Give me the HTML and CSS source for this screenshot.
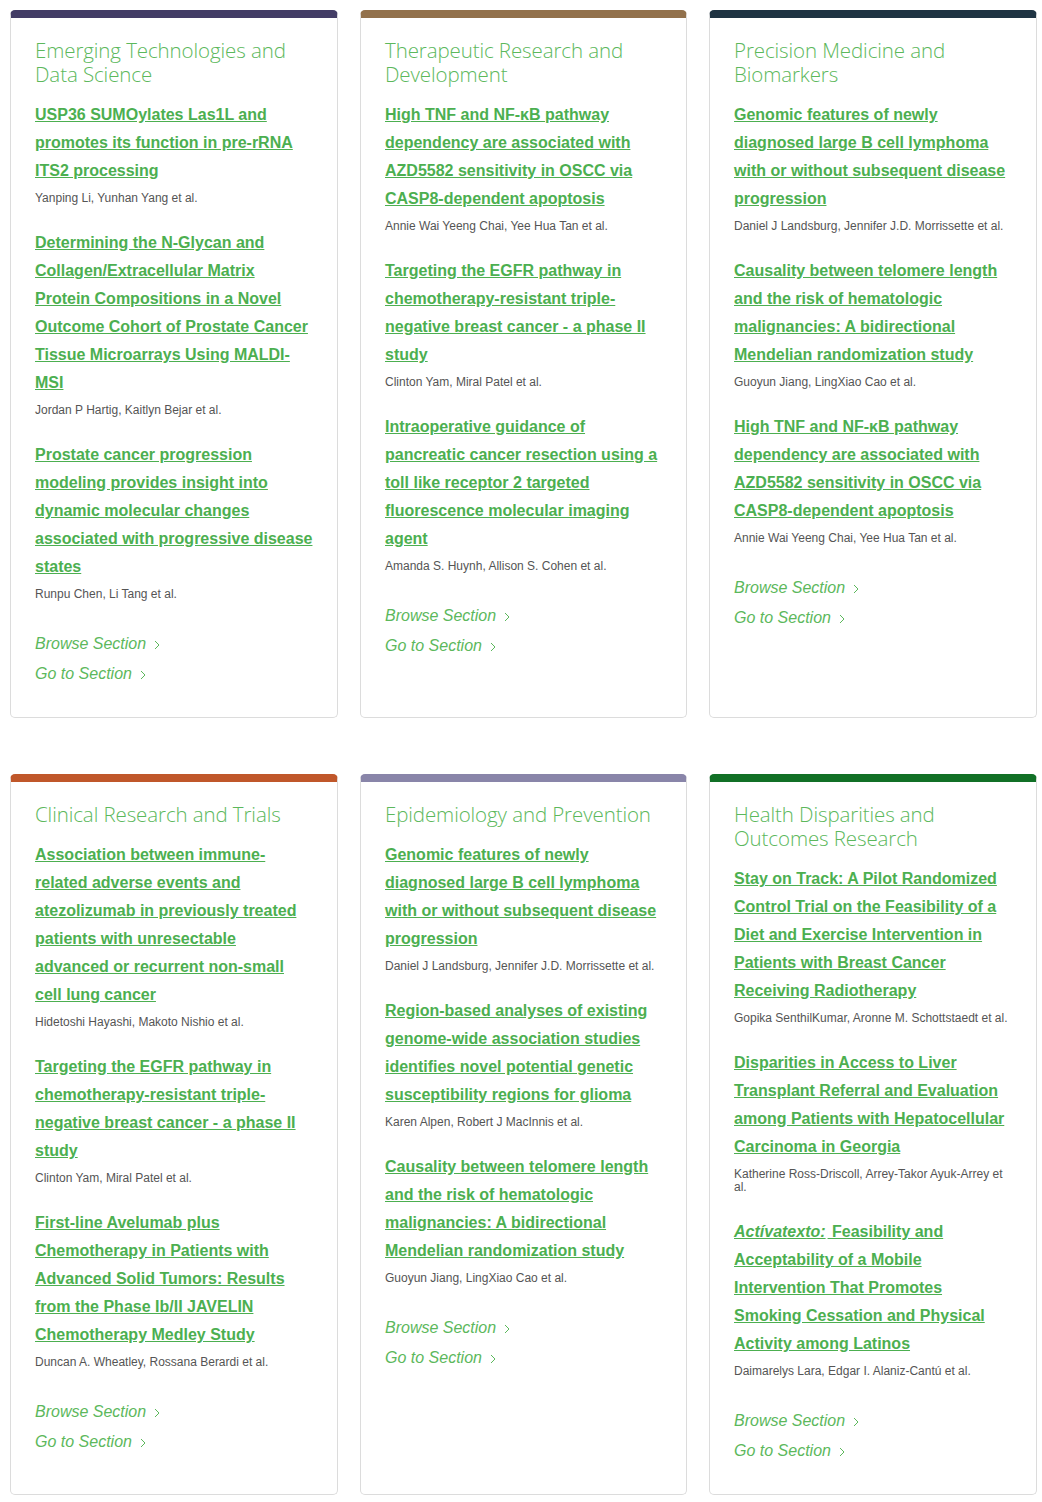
FILE: index.html
```html
<!DOCTYPE html>
<html>
<head>
<meta charset="utf-8">
<link rel="stylesheet" href="styles.css">
</head>
<body>
<div class="grid">

  <section class="card bar-purple">
    <h2 class="card-title">Emerging Technologies and Data Science</h2>
    <div class="article">
      <a class="art-link" href="#">USP36 SUMOylates Las1L and promotes its function in pre-rRNA ITS2 processing</a>
      <p class="authors">Yanping Li, Yunhan Yang et al.</p>
    </div>
    <div class="article">
      <a class="art-link" href="#">Determining the N-Glycan and Collagen/Extracellular Matrix Protein Compositions in a Novel Outcome Cohort of Prostate Cancer Tissue Microarrays Using MALDI-MSI</a>
      <p class="authors">Jordan P Hartig, Kaitlyn Bejar et al.</p>
    </div>
    <div class="article">
      <a class="art-link" href="#">Prostate cancer progression modeling provides insight into dynamic molecular changes associated with progressive disease states</a>
      <p class="authors">Runpu Chen, Li Tang et al.</p>
    </div>
    <div class="actions">
      <a class="action" href="#">Browse Section <svg class="chev" viewBox="0 0 6 10" width="6" height="10"><path d="M1 1 L5 5 L1 9" fill="none" stroke="currentColor" stroke-width="1"/></svg></a>
      <a class="action" href="#">Go to Section <svg class="chev" viewBox="0 0 6 10" width="6" height="10"><path d="M1 1 L5 5 L1 9" fill="none" stroke="currentColor" stroke-width="1"/></svg></a>
    </div>
  </section>

  <section class="card bar-brown">
    <h2 class="card-title">Therapeutic Research and Development</h2>
    <div class="article">
      <a class="art-link" href="#">High TNF and NF-κB pathway dependency are associated with AZD5582 sensitivity in OSCC via CASP8-dependent apoptosis</a>
      <p class="authors">Annie Wai Yeeng Chai, Yee Hua Tan et al.</p>
    </div>
    <div class="article">
      <a class="art-link" href="#">Targeting the EGFR pathway in chemotherapy-resistant triple-negative breast cancer - a phase II study</a>
      <p class="authors">Clinton Yam, Miral Patel et al.</p>
    </div>
    <div class="article">
      <a class="art-link" href="#">Intraoperative guidance of pancreatic cancer resection using a toll like receptor 2 targeted fluorescence molecular imaging agent</a>
      <p class="authors">Amanda S. Huynh, Allison S. Cohen et al.</p>
    </div>
    <div class="actions">
      <a class="action" href="#">Browse Section <svg class="chev" viewBox="0 0 6 10" width="6" height="10"><path d="M1 1 L5 5 L1 9" fill="none" stroke="currentColor" stroke-width="1"/></svg></a>
      <a class="action" href="#">Go to Section <svg class="chev" viewBox="0 0 6 10" width="6" height="10"><path d="M1 1 L5 5 L1 9" fill="none" stroke="currentColor" stroke-width="1"/></svg></a>
    </div>
  </section>

  <section class="card bar-navy">
    <h2 class="card-title">Precision Medicine and Biomarkers</h2>
    <div class="article">
      <a class="art-link" href="#">Genomic features of newly diagnosed large B cell lymphoma with or without subsequent disease progression</a>
      <p class="authors">Daniel J Landsburg, Jennifer J.D. Morrissette et al.</p>
    </div>
    <div class="article">
      <a class="art-link" href="#">Causality between telomere length and the risk of hematologic malignancies: A bidirectional Mendelian randomization study</a>
      <p class="authors">Guoyun Jiang, LingXiao Cao et al.</p>
    </div>
    <div class="article">
      <a class="art-link" href="#">High TNF and NF-κB pathway dependency are associated with AZD5582 sensitivity in OSCC via CASP8-dependent apoptosis</a>
      <p class="authors">Annie Wai Yeeng Chai, Yee Hua Tan et al.</p>
    </div>
    <div class="actions">
      <a class="action" href="#">Browse Section <svg class="chev" viewBox="0 0 6 10" width="6" height="10"><path d="M1 1 L5 5 L1 9" fill="none" stroke="currentColor" stroke-width="1"/></svg></a>
      <a class="action" href="#">Go to Section <svg class="chev" viewBox="0 0 6 10" width="6" height="10"><path d="M1 1 L5 5 L1 9" fill="none" stroke="currentColor" stroke-width="1"/></svg></a>
    </div>
  </section>

  <section class="card bar-orange">
    <h2 class="card-title">Clinical Research and Trials</h2>
    <div class="article">
      <a class="art-link" href="#">Association between immune-related adverse events and atezolizumab in previously treated patients with unresectable advanced or recurrent non-small cell lung cancer</a>
      <p class="authors">Hidetoshi Hayashi, Makoto Nishio et al.</p>
    </div>
    <div class="article">
      <a class="art-link" href="#">Targeting the EGFR pathway in chemotherapy-resistant triple-negative breast cancer - a phase II study</a>
      <p class="authors">Clinton Yam, Miral Patel et al.</p>
    </div>
    <div class="article">
      <a class="art-link" href="#">First-line Avelumab plus Chemotherapy in Patients with Advanced Solid Tumors: Results from the Phase Ib/II JAVELIN Chemotherapy Medley Study</a>
      <p class="authors">Duncan A. Wheatley, Rossana Berardi et al.</p>
    </div>
    <div class="actions">
      <a class="action" href="#">Browse Section <svg class="chev" viewBox="0 0 6 10" width="6" height="10"><path d="M1 1 L5 5 L1 9" fill="none" stroke="currentColor" stroke-width="1"/></svg></a>
      <a class="action" href="#">Go to Section <svg class="chev" viewBox="0 0 6 10" width="6" height="10"><path d="M1 1 L5 5 L1 9" fill="none" stroke="currentColor" stroke-width="1"/></svg></a>
    </div>
  </section>

  <section class="card bar-lavender">
    <h2 class="card-title">Epidemiology and Prevention</h2>
    <div class="article">
      <a class="art-link" href="#">Genomic features of newly diagnosed large B cell lymphoma with or without subsequent disease progression</a>
      <p class="authors">Daniel J Landsburg, Jennifer J.D. Morrissette et al.</p>
    </div>
    <div class="article">
      <a class="art-link" href="#">Region-based analyses of existing genome-wide association studies identifies novel potential genetic susceptibility regions for glioma</a>
      <p class="authors">Karen Alpen, Robert J MacInnis et al.</p>
    </div>
    <div class="article">
      <a class="art-link" href="#">Causality between telomere length and the risk of hematologic malignancies: A bidirectional Mendelian randomization study</a>
      <p class="authors">Guoyun Jiang, LingXiao Cao et al.</p>
    </div>
    <div class="actions">
      <a class="action" href="#">Browse Section <svg class="chev" viewBox="0 0 6 10" width="6" height="10"><path d="M1 1 L5 5 L1 9" fill="none" stroke="currentColor" stroke-width="1"/></svg></a>
      <a class="action" href="#">Go to Section <svg class="chev" viewBox="0 0 6 10" width="6" height="10"><path d="M1 1 L5 5 L1 9" fill="none" stroke="currentColor" stroke-width="1"/></svg></a>
    </div>
  </section>

  <section class="card bar-green">
    <h2 class="card-title">Health Disparities and Outcomes Research</h2>
    <div class="article">
      <a class="art-link" href="#">Stay on Track: A Pilot Randomized Control Trial on the Feasibility of a Diet and Exercise Intervention in Patients with Breast Cancer Receiving Radiotherapy</a>
      <p class="authors">Gopika SenthilKumar, Aronne M. Schottstaedt et al.</p>
    </div>
    <div class="article">
      <a class="art-link" href="#">Disparities in Access to Liver Transplant Referral and Evaluation among Patients with Hepatocellular Carcinoma in Georgia</a>
      <p class="authors">Katherine Ross-Driscoll, Arrey-Takor Ayuk-Arrey et al.</p>
    </div>
    <div class="article">
      <a class="art-link" href="#"><em>Actívatexto:</em> Feasibility and Acceptability of a Mobile Intervention That Promotes Smoking Cessation and Physical Activity among Latinos</a>
      <p class="authors">Daimarelys Lara, Edgar I. Alaniz-Cantú et al.</p>
    </div>
    <div class="actions">
      <a class="action" href="#">Browse Section <svg class="chev" viewBox="0 0 6 10" width="6" height="10"><path d="M1 1 L5 5 L1 9" fill="none" stroke="currentColor" stroke-width="1"/></svg></a>
      <a class="action" href="#">Go to Section <svg class="chev" viewBox="0 0 6 10" width="6" height="10"><path d="M1 1 L5 5 L1 9" fill="none" stroke="currentColor" stroke-width="1"/></svg></a>
    </div>
  </section>

</div>
</body>
</html>
```

FILE: styles.css
```css
html, body {
  margin: 0;
  padding: 0;
  background: #ffffff;
}

body {
  padding: 10px 5px 8px 10px;
  font-family: "Liberation Sans", Arial, sans-serif;
}

.grid {
  display: grid;
  grid-template-columns: 328px 327px 328px;
  column-gap: 22px;
  row-gap: 56px;
}

.card {
  border: 1px solid #dcdcdc;
  border-top: 8px solid #433d66;
  border-radius: 5px;
  padding: 20px 24px 28px 24px;
  background: #fff;
}

.bar-purple { border-top-color: #433d66; }
.bar-brown { border-top-color: #92714c; }
.bar-navy { border-top-color: #1f3443; }
.bar-orange { border-top-color: #c0572a; }
.bar-lavender { border-top-color: #8985a9; }
.bar-green { border-top-color: #117026; }

.card-title {
  margin: 0 0 15px 0;
  font-family: "Open Sans", sans-serif;
  font-weight: 300;
  font-size: 20.5px;
  line-height: 24px;
  color: #5cb85c;
  letter-spacing: -0.1px;
}

.article {
  margin-bottom: 24px;
}

.article:last-of-type {
  margin-bottom: 0;
}

.art-link {
  display: block;
  font-weight: bold;
  font-size: 16px;
  line-height: 28px;
  color: #4caf50;
  text-decoration: underline;
}

.art-link em {
  font-style: italic;
  padding-right: 2px;
}

.authors {
  margin: 7px 0 0 0;
  font-size: 12px;
  line-height: 13px;
  color: #555555;
}

.actions {
  display: flex;
  flex-direction: column;
  margin-top: 28px;
}

.action {
  display: flex;
  align-items: center;
  gap: 8px;
  font-size: 16px;
  line-height: 30px;
  font-style: italic;
  color: #5cb85c;
  text-decoration: none;
}

.chev {
  margin-top: 2px;
}
```
